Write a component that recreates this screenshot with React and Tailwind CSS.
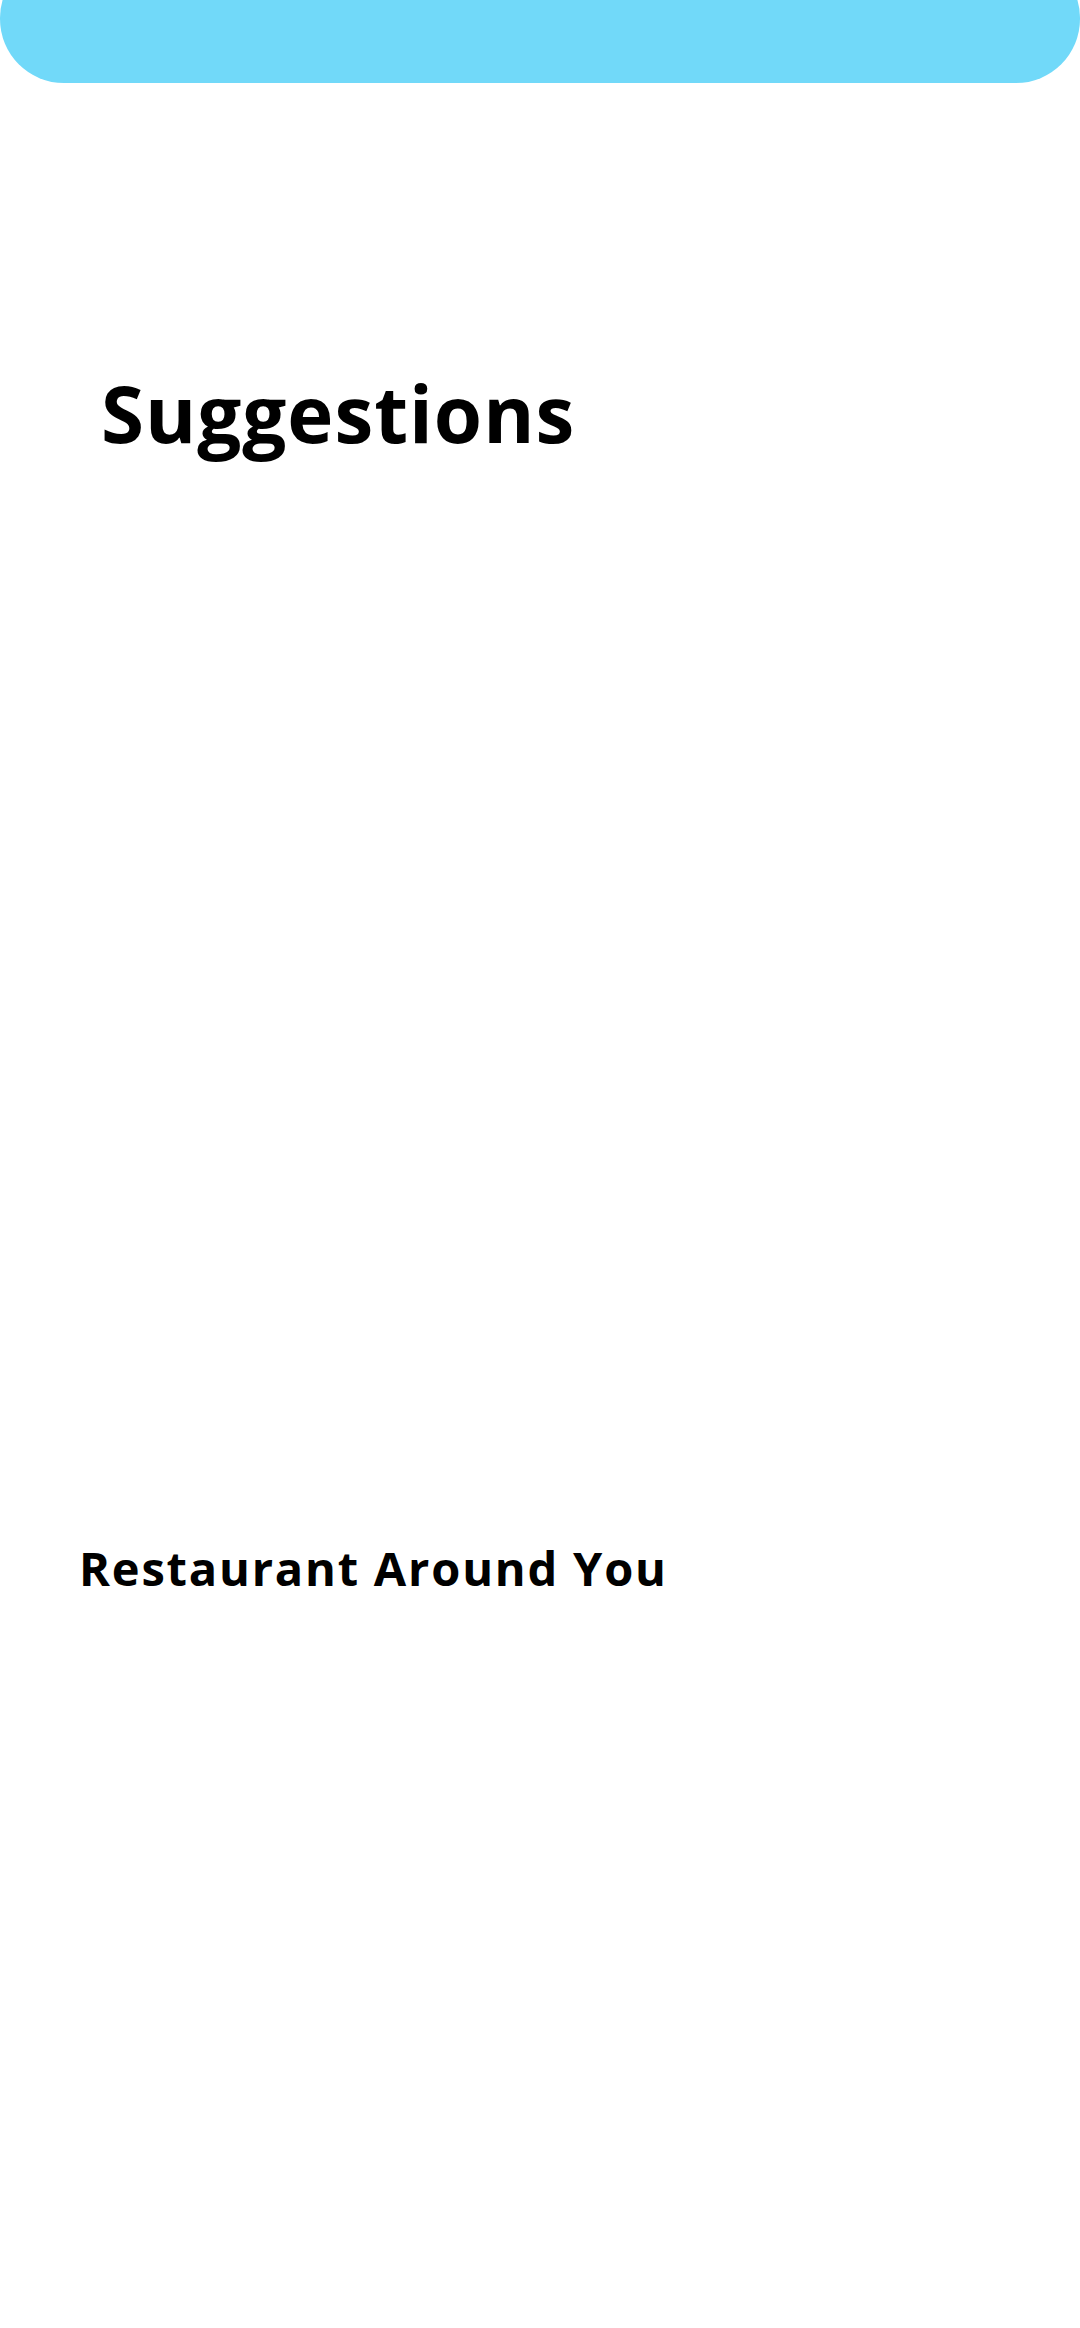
const font = { fontFamily: '"Open Sans", "Liberation Sans", sans-serif' };

// Top banner with round corners, partly pushed above the viewport.
const Banner = () => (
  <div className="-mt-[46px] h-[129px] w-full rounded-[64px] bg-[#71d9f9]" />
);

export default function App() {
  return (
    <div className="min-h-[2328px] w-[1080px] bg-white" style={font}>
      <Banner />
      <h1 className="mt-[291px] pl-[101px] text-[78px] font-bold leading-none text-black tracking-[1px]">
        Suggestions
      </h1>
      <section className="mt-[1093px] pl-[79px]">
        <h2 className="text-[47px] font-bold leading-none text-black tracking-[1.8px]">
          Restaurant Around You
        </h2>
      </section>
    </div>
  );
}
